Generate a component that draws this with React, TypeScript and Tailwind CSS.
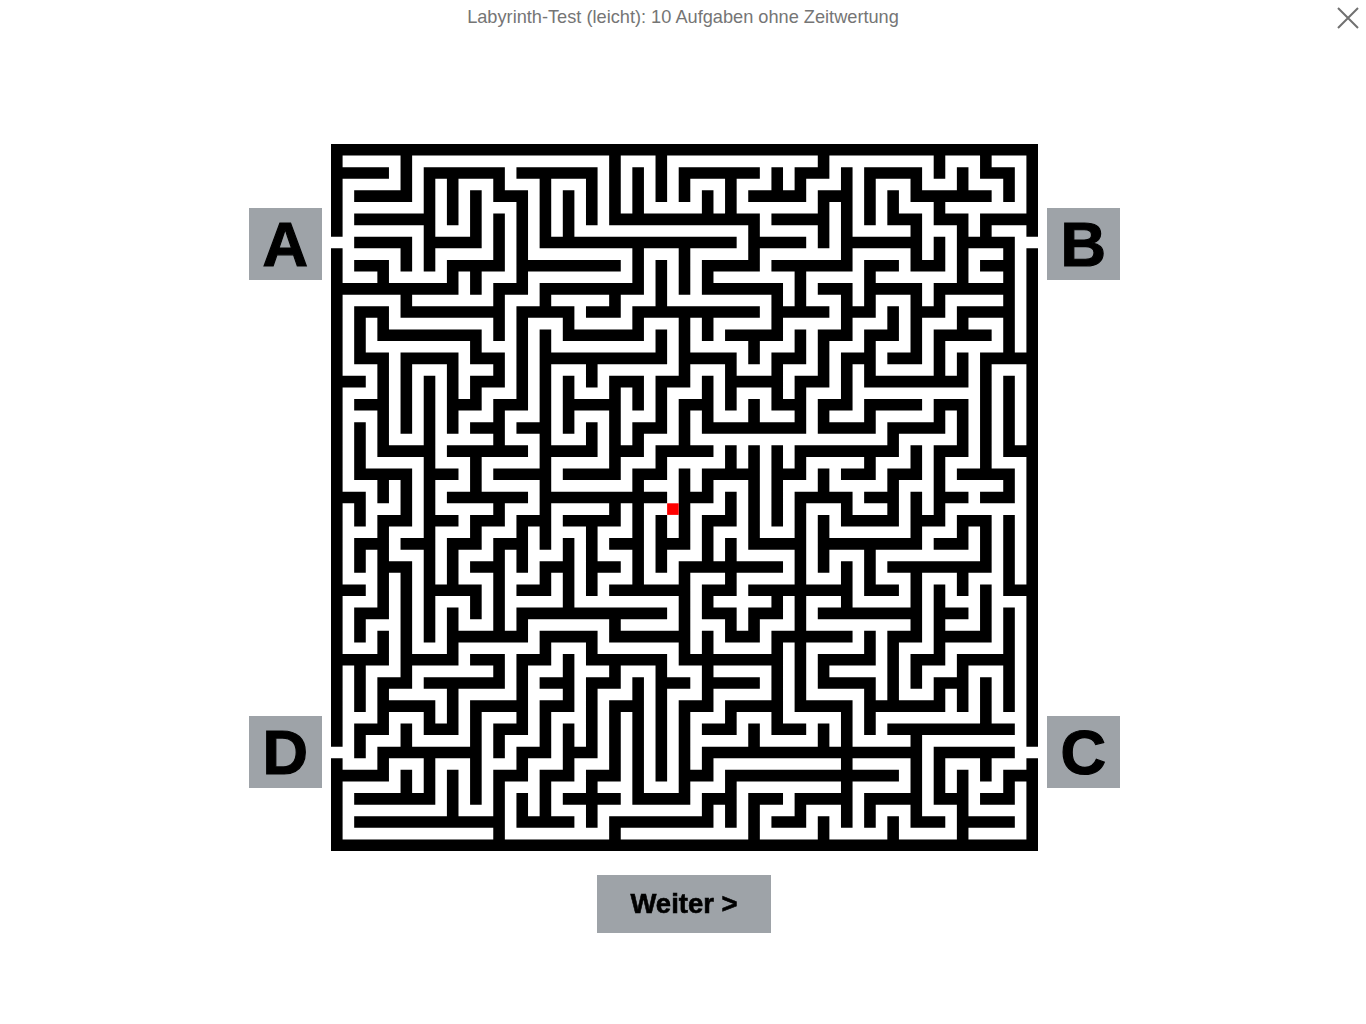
import React from "react";

type Seg = [number, number, number];

const H: Seg[] = [
  [0,0,30],[30,0,30],
  [1,0,2],[1,4,7],[1,8,11],[1,15,18],[1,20,21],[1,23,25],[1,28,29],
  [2,1,3],[2,7,8],[2,18,20],[2,21,22],[2,25,28],
  [3,1,4],[3,12,18],[3,19,21],[3,24,25],[3,26,27],[3,28,30],
  [4,1,3],[4,4,6],[4,9,17],[4,18,20],[4,22,25],[4,27,29],
  [5,1,2],[5,5,7],[5,8,12],[5,16,18],[5,19,22],[5,23,24],[5,25,26],[5,28,29],
  [6,0,5],[6,7,8],[6,9,13],[6,16,19],[6,21,22],[6,23,25],[6,26,29],
  [7,1,2],[7,3,7],[7,8,10],[7,11,12],[7,13,18],[7,19,21],[7,22,23],[7,25,26],[7,27,29],
  [8,2,6],[8,10,13],[8,17,19],[8,21,22],[8,23,24],[8,26,28],
  [9,1,2],[9,3,5],[9,6,7],[9,9,14],[9,15,17],[9,19,20],[9,22,23],[9,24,25],[9,28,30],
  [10,0,1],[10,6,7],[10,12,13],[10,14,15],[10,17,19],[10,20,21],[10,23,27],
  [11,1,2],[11,5,6],[11,7,8],[11,10,12],[11,15,16],[11,19,20],[11,21,22],[11,23,25],[11,26,27],
  [12,6,7],[12,8,9],[12,13,14],[12,16,20],[12,21,23],[12,24,26],
  [13,2,4],[13,5,8],[13,9,11],[13,12,13],[13,14,16],[13,20,24],[13,26,27],[13,29,30],
  [14,1,3],[14,4,5],[14,7,9],[14,10,12],[14,13,14],[14,16,18],[14,19,20],[14,22,23],[14,24,25],[14,27,29],
  [15,0,1],[15,5,8],[15,9,14],[15,15,16],[15,20,22],[15,23,24],[15,26,27],[15,28,29],
  [16,2,3],[16,4,5],[16,6,7],[16,8,9],[16,10,12],[16,16,17],[16,22,24],[16,25,26],[16,27,28],
  [17,1,2],[17,3,4],[17,5,6],[17,7,8],[17,12,13],[17,14,15],[17,18,20],[17,21,25],[17,26,27],
  [18,2,3],[18,6,7],[18,9,10],[18,11,12],[18,15,19],[18,24,28],
  [19,0,1],[19,4,6],[19,8,9],[19,12,15],[19,16,17],[19,18,20],[19,20,22],[19,23,24],[19,29,30],
  [20,1,2],[20,8,14],[20,16,17],[20,18,19],[20,21,25],[20,26,27],
  [21,5,8],[21,9,11],[21,12,15],[21,17,18],[21,19,20],[21,20,22],[21,24,25],[21,26,28],
  [22,0,2],[22,3,5],[22,6,7],[22,8,9],[22,11,14],[22,15,19],[22,21,23],[22,25,26],[22,27,29],
  [23,2,3],[23,4,7],[23,9,10],[23,11,12],[23,14,15],[23,16,18],[23,21,23],[23,26,27],
  [24,2,4],[24,6,8],[24,9,10],[24,12,13],[24,15,16],[24,17,19],[24,20,22],[24,23,26],
  [25,1,2],[25,4,5],[25,7,8],[25,16,17],[25,19,20],[25,24,29],
  [26,2,6],[26,8,9],[26,10,11],[26,16,20],[26,20,25],[26,26,29],
  [27,0,2],[27,7,8],[27,9,10],[27,11,12],[27,15,16],[27,17,20],[27,20,24],[27,29,30],
  [28,1,4],[28,10,12],[28,13,15],[28,16,17],[28,18,19],[28,20,22],[28,23,25],[28,26,27],[28,28,29],
  [29,1,7],[29,8,10],[29,12,16],[29,19,20],[29,25,26],[29,27,29],
];

const V: Seg[] = [
  [0,0,3.5],[0,4.5,25.5],[0,26.5,30],[30,0,3.5],[30,4.5,25.5],[30,26.5,30],
  [1,7,9],[1,12,14],[1,15,16],[1,17,18],[1,20,21],[1,22,24],[1,25,26],
  [2,5,6],[2,7,8],[2,9,13],[2,14,15],[2,16,20],[2,21,22],[2,23,25],[2,26,27],
  [3,0,2],[3,4,5],[3,6,7],[3,9,12],[3,14,16],[3,18,22],[3,22,23],[3,25,26],[3,27,28],
  [4,1,5],[4,10,21],[4,24,25],[4,26,28],
  [5,1,3],[5,5,6],[5,9,12],[5,17,19],[5,20,22],[5,23,25],[5,27,29],
  [6,2,4],[6,5,6],[6,8,9],[6,10,11],[6,13,15],[6,16,17],[6,19,20],[6,24,28],
  [7,1,2],[7,3,5],[7,6,8],[7,9,10],[7,11,13],[7,15,16],[7,17,21],[7,22,23],[7,25,26],[7,27,30],
  [8,2,6],[8,7,11],[8,16,18],[8,20,21],[8,22,25],[8,26,27],[8,28,29],
  [9,1,4],[9,6,7],[9,8,17],[9,18,19],[9,21,22],[9,24,26],[9,27,29],
  [10,2,4],[10,7,8],[10,10,12],[10,17,20],[10,22,24],[10,25,27],
  [11,1,3],[11,9,10],[11,12,13],[11,16,19],[11,21,22],[11,23,26],[11,27,29],
  [12,0,3],[12,6,7],[12,10,14],[12,15,16],[12,20,21],[12,22,23],[12,24,27],[12,29,30],
  [13,1,3],[13,4,6],[13,7,8],[13,10,11],[13,12,13],[13,14,19],[13,23,28],
  [14,0,2],[14,5,7],[14,8,9],[14,10,12],[14,13,14],[14,16,18],[14,22,27],
  [15,1,2],[15,4,6],[15,7,10],[15,11,13],[15,14,17],[15,18,22],[15,24,28],
  [16,2,3],[16,5,6],[16,7,8],[16,10,12],[16,14,15],[16,16,18],[16,19,20],[16,21,24],[16,26,27],[16,28,29],
  [17,1,3],[17,9,11],[17,13,14],[17,15,16],[17,17,19],[17,20,21],[17,24,25],[17,27,29],
  [18,3,5],[18,8,9],[18,11,12],[18,13,17],[18,20,21],[18,25,26],[18,28,30],
  [19,1,2],[19,6,8],[19,9,11],[19,13,16],[19,19,20],[19,21,25],
  [20,1,2],[20,5,7],[20,8,9],[20,10,12],[20,13,14],[20,15,24],[20,28,29],
  [21,0,1],[21,2,4],[21,8,10],[21,11,12],[21,14,15],[21,16,18],[21,22,23],[21,25,26],[21,29,30],
  [22,1,5],[22,6,8],[22,9,11],[22,15,16],[22,18,20],[22,24,29],
  [23,1,3],[23,5,7],[23,8,10],[23,11,12],[23,13,14],[23,17,19],[23,21,22],[23,23,25],[23,28,29],
  [24,2,3],[24,7,8],[24,12,13],[24,14,16],[24,21,24],[24,29,30],
  [25,1,2],[25,3,5],[25,6,9],[25,13,14],[25,15,17],[25,18,21],[25,22,23],[25,25,29],
  [26,0,1],[26,2,3],[26,4,5],[26,6,7],[26,8,10],[26,11,12],[26,13,16],[26,19,22],[26,23,24],[26,26,28],
  [27,1,2],[27,3,6],[27,7,8],[27,9,10],[27,11,13],[27,16,17],[27,18,19],[27,22,24],[27,27,30],
  [28,0,1],[28,3,4],[28,9,14],[28,16,18],[28,19,21],[28,23,25],[28,26,27],
  [29,1,2],[29,4,9],[29,10,13],[29,14,15],[29,16,19],[29,20,24],[29,27,28],
];

const wallPath =
  H.map(([j, a, b]) => `M${a * 2} ${j * 2}H${b * 2}`).join("") +
  V.map(([i, a, b]) => `M${i * 2} ${a * 2}V${b * 2}`).join("");

function Maze() {
  return (
    <svg viewBox="-0.5 -0.5 61 61" className="block w-[707px] h-[707px] blur-[0.4px]" role="img" aria-label="Labyrinth">
      <path d={wallPath} fill="none" stroke="#000" strokeWidth={1} strokeLinecap="square" />
      <rect x={28.5} y={30.5} width={1} height={1} fill="#ff0000" />
    </svg>
  );
}

function Label({ children }: { children: React.ReactNode }) {
  return (
    <div className="w-[72.5px] h-[72px] flex items-center justify-center bg-[#9ea3a8]">
      <span className="text-black font-bold text-[63px] leading-none [-webkit-text-stroke:1.2px_black] blur-[0.4px]">
        {children}
      </span>
    </div>
  );
}

export default function App() {
  return (
    <div className="relative w-full min-h-[1024px] bg-white [font-family:'Liberation_Sans',Arial,sans-serif]">
      <header className="h-[36px] flex items-center justify-center text-[18.2px] text-[#757575]">
        Labyrinth-Test (leicht): 10 Aufgaben ohne Zeitwertung
      </header>
      <svg viewBox="0 0 22 22" className="absolute top-[7px] left-[1337px] w-[22px] h-[22px]" fill="none" stroke="#707070" strokeWidth={2}>
        <path d="M1 1L21 21M21 1L1 21" />
      </svg>
      <main className="mt-[108px] ml-[249px] flex items-start">
        <div className="h-[707px] pt-[64px] pb-[63px] flex flex-col justify-between mr-[9px]">
          <Label>A</Label>
          <Label>D</Label>
        </div>
        <div className="flex flex-col items-center">
          <Maze />
          <button className="mt-[24px] w-[174px] h-[58px] pt-[2px] bg-[#9ea3a8]">
            <span className="text-black font-bold text-[27.5px] leading-none [-webkit-text-stroke:0.6px_black] blur-[0.3px]">
              Weiter &gt;
            </span>
          </button>
        </div>
        <div className="h-[707px] pt-[64px] pb-[63px] flex flex-col justify-between ml-[9.5px]">
          <Label>B</Label>
          <Label>C</Label>
        </div>
      </main>
    </div>
  );
}
